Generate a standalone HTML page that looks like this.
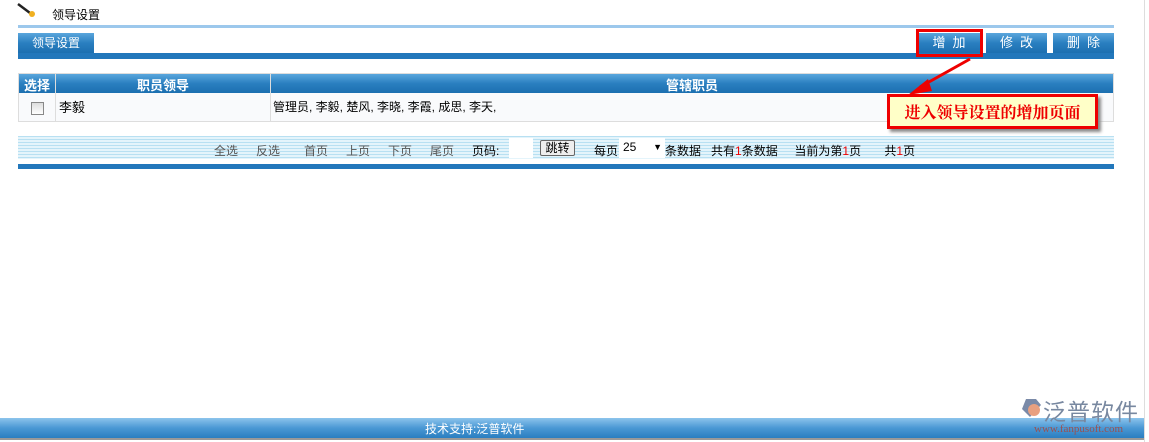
<!DOCTYPE html>
<html><head><meta charset="utf-8"><style>
*{margin:0;padding:0;box-sizing:border-box}
body{width:1149px;height:442px;background:#fff;position:relative;overflow:hidden;font-family:"Liberation Sans","WenQuanYi Zen Hei","Noto Sans CJK SC",sans-serif;font-size:12px;color:#000}
.a{position:absolute}
.blue{background:linear-gradient(#5aa6dc,#2a7fc0 50%,#1c6fb0)}
.btn{color:#fff;text-align:center;line-height:20px;letter-spacing:7px;padding-left:7px;font-size:13px}
</style></head><body>
<svg class="a" style="left:16px;top:2px" width="22" height="16"><line x1="2" y1="2" x2="14" y2="11" stroke="#222" stroke-width="2.5"/><circle cx="16" cy="12" r="3" fill="#f0b020"/></svg>
<div class="a" style="left:52px;top:6px;font-size:12px">领导设置</div>
<div class="a" style="left:18px;top:25px;width:1096px;height:3px;background:#9cc8ec"></div>
<div class="a blue" style="left:18px;top:33px;width:76px;height:20px;color:#fff;text-align:center;line-height:20px">领导设置</div>
<div class="a blue btn" style="left:918px;top:33px;width:62px;height:20px">增加</div>
<div class="a blue btn" style="left:986px;top:33px;width:61px;height:20px">修改</div>
<div class="a blue btn" style="left:1053px;top:33px;width:61px;height:20px">删除</div>
<div class="a" style="left:18px;top:53px;width:1096px;height:6px;background:#2277bb"></div>
<div class="a" style="left:916px;top:29px;width:67px;height:28px;border:3px solid #e00"></div>
<div class="a" style="left:18px;top:73px;width:1096px;height:49px;border:1px solid #ddd;background:#f9fafc"></div>
<div class="a blue" style="left:19px;top:74px;width:1094px;height:19px"></div>
<div class="a" style="left:55px;top:74px;width:1px;height:48px;background:#ddd"></div>
<div class="a" style="left:270px;top:74px;width:1px;height:48px;background:#ddd"></div>
<div class="a" style="left:19px;top:75px;width:36px;color:#fff;font-weight:bold;text-align:center;font-size:13px">选择</div>
<div class="a" style="left:56px;top:75px;width:214px;color:#fff;font-weight:bold;text-align:center;font-size:13px">职员领导</div>
<div class="a" style="left:271px;top:75px;width:842px;color:#fff;font-weight:bold;text-align:center;font-size:13px">管辖职员</div>
<div class="a" style="left:31px;top:102px;width:13px;height:13px;border:1px solid #888;background:linear-gradient(#ddd,#fff)"></div>
<div class="a" style="left:59px;top:97px;font-size:13px">李毅</div>
<div class="a" style="left:273px;top:98px;font-size:12px">管理员, 李毅, 楚风, 李晓, 李霞, 成思, 李天,</div>
<svg class="a" style="left:900px;top:55px" width="80" height="45"><line x1="70" y1="4" x2="20" y2="32" stroke="#e00" stroke-width="3"/><polygon points="8,40 28,24 32,36" fill="#e00"/></svg>
<div class="a" style="left:887px;top:94px;width:211px;height:35px;border:3px solid #e00;background:#ffffc8;color:#e00;font-weight:bold;font-size:16px;text-align:center;line-height:29px;box-shadow:3px 3px 3px #888;font-family:'Noto Serif CJK SC',serif">进入领导设置的增加页面</div>
<div class="a" style="left:18px;top:136px;width:1096px;height:23px;background:repeating-linear-gradient(#b8e0f2 0 1px,#e4f4fb 1px 3px)"></div>
<div class="a" style="left:18px;top:142px;font-size:12px;color:#555;white-space:pre;width:1096px"><span style="position:absolute;left:196px">全选</span><span style="position:absolute;left:238px">反选</span><span style="position:absolute;left:286px">首页</span><span style="position:absolute;left:328px">上页</span><span style="position:absolute;left:370px">下页</span><span style="position:absolute;left:412px">尾页</span><span style="position:absolute;left:454px;color:#000">页码:</span></div>
<div class="a" style="left:509px;top:138px;width:24px;height:20px;background:#fff"></div>
<div class="a" style="left:540px;top:140px;width:35px;height:16px;border:1px solid #666;border-radius:2px;background:#eee;text-align:center;line-height:14px">跳转</div>
<div class="a" style="left:594px;top:142px">每页</div>
<div class="a" style="left:619px;top:138px;width:46px;height:20px;background:#fff;line-height:18px;padding-left:4px">25<span style="position:absolute;right:3px;font-size:9px">▼</span></div>
<div class="a" style="left:665px;top:142px;white-space:nowrap">条数据 &nbsp; 共有<span style="color:#e00">1</span>条数据 &nbsp; &nbsp; 当前为第<span style="color:#e00">1</span>页 &nbsp; &nbsp; &nbsp; 共<span style="color:#e00">1</span>页</div>
<div class="a" style="left:18px;top:164px;width:1096px;height:5px;background:#2277bb"></div>
<div class="a" style="left:0;top:418px;width:1145px;height:20px;background:linear-gradient(#8cc4ec,#4a98d4 50%,#2a7ec0)"></div>
<div class="a" style="left:0;top:438px;width:1145px;height:2px;background:#999"></div>
<div class="a" style="left:1144px;top:0;width:1px;height:442px;background:#ddd"></div>
<div class="a" style="left:425px;top:420px;color:#fff;font-size:12px">技术支持:泛普软件</div>
<svg class="a" style="left:1020px;top:397px" width="22" height="22"><polygon points="6,2 16,2 21,8 10,20 2,12" fill="#7a8aa8"/><circle cx="14" cy="13" r="6" fill="#e8a080"/></svg>
<div class="a" style="left:1043px;top:393px;font-size:23px;color:#7888a0;letter-spacing:1px">泛普软件</div>
<div class="a" style="left:1034px;top:423px;font-size:11px;color:#9a5050;font-family:'Liberation Serif',serif">www.fanpusoft.com</div>
</body></html>
